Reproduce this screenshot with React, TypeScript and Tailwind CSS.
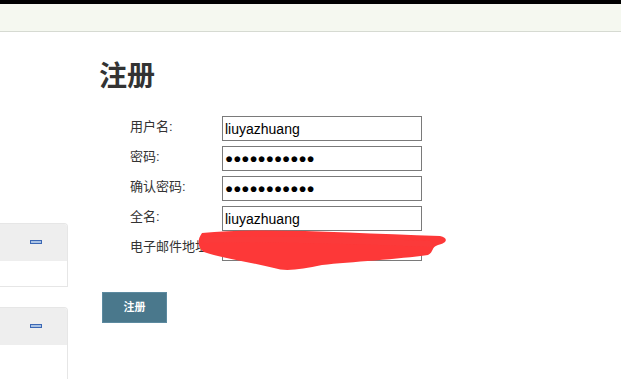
const fields = [
  { label: '用户名:', value: 'liuyazhuang', dots: false },
  { label: '密码:', value: '●●●●●●●●●●●', dots: true },
  { label: '确认密码:', value: '●●●●●●●●●●●', dots: true },
  { label: '全名:', value: 'liuyazhuang', dots: false },
  { label: '电子邮件地址:', value: '', dots: false },
];

const SideBox: React.FC<{ tall?: boolean }> = ({ tall }) => (
  <div
    className={`w-[68px] border border-l-0 border-[#e6e6e6] rounded-tr-[4px] overflow-hidden ${tall ? 'h-[90px]' : 'h-[64px]'}`}
  >
    <div className="h-[37px] bg-[#eeeeee] flex items-center pl-[30px]">
      <div className="w-[12px] h-[4px] border border-[#3b67b4] bg-[#a9c2e4] -mt-[1px]"></div>
    </div>
    <div className="bg-white"></div>
  </div>
);

const App: React.FC = () => {
  return (
    <div className="w-full h-[379px] overflow-hidden bg-white font-['Liberation_Sans','Noto_Sans_CJK_SC',sans-serif] text-[#333]">
      <div className="h-[4px] bg-black"></div>
      <div className="h-[28px] bg-[#f5f8f0] border-b border-[#d6dad2]"></div>

      <div className="flex">
        <div className="w-[68px] shrink-0 pt-[191px] flex flex-col gap-[20px]">
          <SideBox />
          <SideBox tall />
        </div>

        <div className="relative pl-[31px] pt-[28px] flex-1">
          <h1 className="text-[28px] leading-[34px] font-bold text-[#333]">注册</h1>

          <div className="mt-[22px] ml-[31px] flex flex-col gap-[5px]">
            {fields.map((f) => (
              <div key={f.label} className="flex items-start h-[25px]">
                <label className="w-[92px] text-[13px] leading-[17px] pt-[2px]">{f.label}</label>
                <input
                  readOnly
                  value={f.value}
                  className={`w-[200px] h-[25px] border border-[#7a7a7a] px-[2px] text-black outline-none ${
                    f.dots ? 'text-[13.5px]' : 'text-[14px]'
                  }`}
                />
              </div>
            ))}
          </div>

          <button className="mt-[31px] ml-[3px] w-[65px] h-[31px] bg-[#4a788c] border border-[#5c8aa0] text-white text-[11px] font-bold">
            注册
          </button>

          <svg
            className="absolute left-[130px] top-[196px]"
            width="260"
            height="50"
            viewBox="198 228 260 50"
          >
            <path
              d="M202,233 C260,227 350,233 440,236 C449,238 447,243 438,245 C431,247 434,252 428,255 C400,259 350,262 322,265 C302,269 286,272 274,268 C250,262 220,258 204,252 C197,247 197,240 202,233 Z"
              fill="#fd3838"
            />
            <path d="M206,240 C280,238 360,241 430,244" stroke="#fb3a3a" strokeWidth="6" fill="none" strokeLinecap="round" />
          </svg>
        </div>
      </div>
    </div>
  );
};

export default App;
